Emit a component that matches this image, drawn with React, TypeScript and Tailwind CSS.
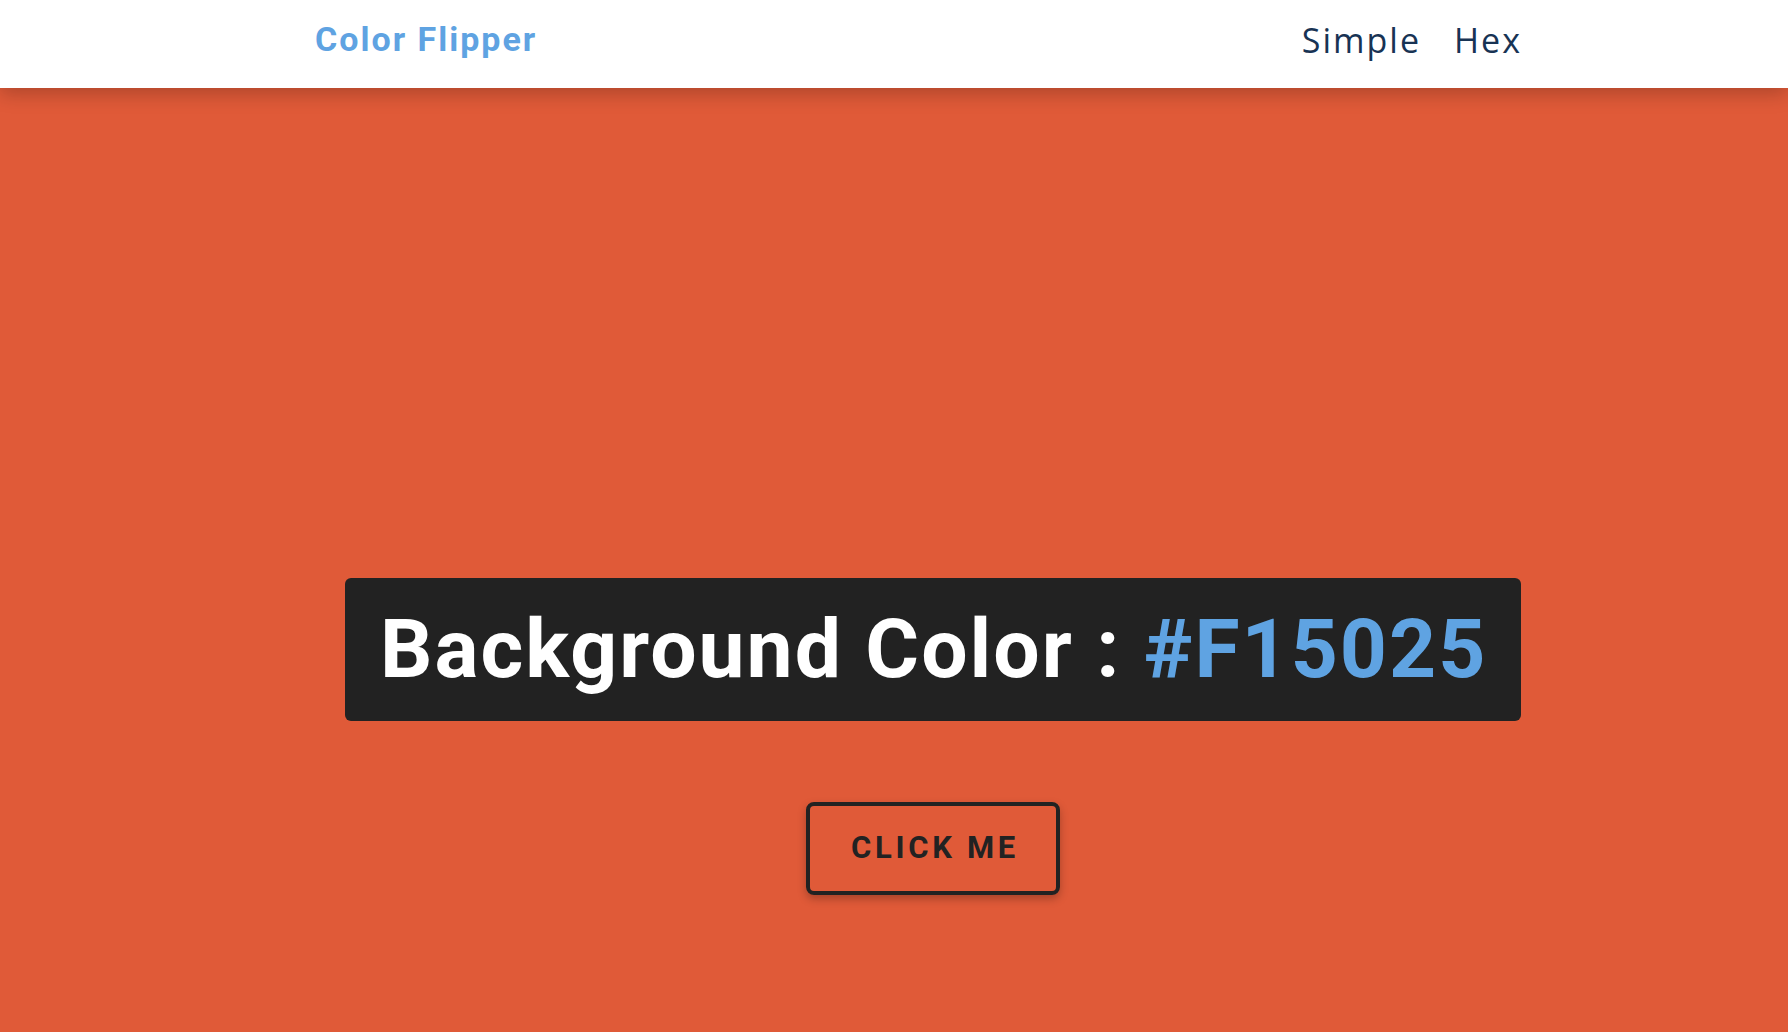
import React from "react";

export default function App() {
  return (
    <div className="min-h-[1032px] flex flex-col bg-[#e05a38]">
      <nav className="relative z-10 h-[88px] bg-white shadow-[0_6px_18px_rgba(0,0,0,0.22)] flex items-center justify-between pl-[315px] pr-[266px]">
        <h4
          className="text-[#5fa3e2] font-bold text-[34px] tracking-[2px] -mt-[10px]"
          style={{ fontFamily: "Roboto, sans-serif" }}
        >
          Color Flipper
        </h4>
        <ul
          className="flex items-center gap-[33px] text-[#183354] text-[34px] tracking-[2px] -mt-[7px]"
          style={{ fontFamily: '"Open Sans", sans-serif' }}
        >
          <li>Simple</li>
          <li>Hex</li>
        </ul>
      </nav>
      <main className="flex-1 flex flex-col items-start pl-[345px] pt-[490px]">
        <div className="flex flex-col items-center">
          <h2
            className="w-[1176px] h-[143px] rounded-[6px] bg-[#222222] text-white font-bold text-[82.2px] leading-[143px] tracking-[2px] pl-[35px] whitespace-nowrap"
            style={{ fontFamily: "Roboto, sans-serif" }}
          >
            Background Color : <span className="text-[#5fa3e2]">#F15025</span>
          </h2>
          <button
            className="mt-[81px] w-[254px] h-[93px] border-[4px] border-[#222222] rounded-[8px] text-[#222222] font-bold text-[31px] tracking-[3.7px] uppercase shadow-[0_4px_8px_rgba(0,0,0,0.25)] flex items-center justify-center pl-[4px]"
            style={{ fontFamily: "Roboto, sans-serif" }}
          >
            Click Me
          </button>
        </div>
      </main>
    </div>
  );
}
